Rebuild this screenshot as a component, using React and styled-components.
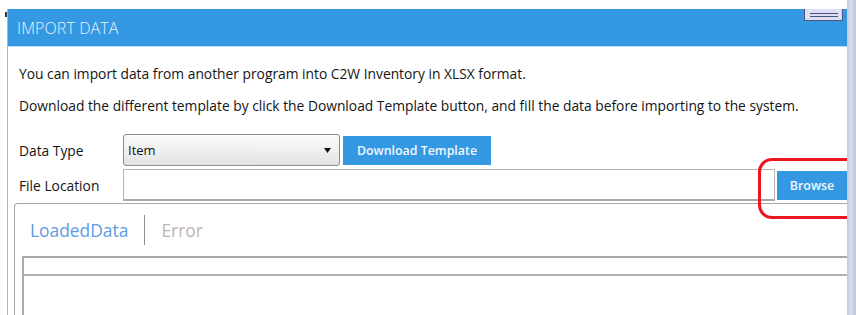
import styled, { createGlobalStyle } from "styled-components";

const GlobalStyle = createGlobalStyle`
  html, body {
    margin: 0;
    padding: 0;
    background: #ffffff;
  }
  body {
    font-family: "Open Sans", "Noto Sans", sans-serif;
    overflow: hidden;
  }
`;

export default function App() {
  return (
    <>
      <GlobalStyle />
      <PageStyled>
        <div className="stage">
          <span className="tick"></span>
          <Dialog>
            <TitleBar>
              <h1>IMPORT DATA</h1>
              <MenuButton aria-label="menu">
                <span></span>
                <span></span>
              </MenuButton>
            </TitleBar>
            <Body>
              <Intro>
                You can import data from another program into C2W Inventory in
                XLSX format.
              </Intro>
              <Intro>
                Download the different template by click the Download Template
                button, and fill the data before importing to the system.
              </Intro>
              <FormRow $top={19}>
                <Label>Data Type</Label>
                <SelectBox>
                  <span>Item</span>
                  <svg width="7" height="5" viewBox="0 0 7 5">
                    <path d="M0 0h7L3.5 5z" fill="#111" />
                  </svg>
                </SelectBox>
                <BlueButton $width={148}>Download Template</BlueButton>
              </FormRow>
              <FormRow $top={3}>
                <Label>File Location</Label>
                <FileInput />
                <BlueButton $width={70} $highlight>
                  Browse
                </BlueButton>
              </FormRow>
              <Panel>
                <Tabs>
                  <Tab $active>LoadedData</Tab>
                  <TabDivider />
                  <Tab>Error</Tab>
                </Tabs>
                <Grid>
                  <div className="head"></div>
                </Grid>
              </Panel>
            </Body>
          </Dialog>
        </div>
        <SideStrip />
      </PageStyled>
    </>
  );
}

const PageStyled = styled.div`
  display: flex;
  width: 856px;
  height: 315px;
  overflow: hidden;
  .stage {
    position: relative;
    flex: 1;
    padding: 9px 0 0 7px;
    min-width: 0;
  }
  .tick {
    position: absolute;
    left: 5px;
    top: 12px;
    width: 2px;
    height: 5px;
    background: #333;
  }
`;

const SideStrip = styled.div`
  width: 9px;
  height: 315px;
  background: linear-gradient(90deg, #c2cadb 0%, #d6dcea 40%, #bcc6d8 100%);
`;

const Dialog = styled.div`
  height: 306px;
  border-left: 1px solid #8fc0ec;
  background: #ffffff;
  overflow: hidden;
`;

const TitleBar = styled.div`
  position: relative;
  height: 37px;
  background: #3598e3;
  border-bottom: 1px solid #b5dbfa;
  display: flex;
  align-items: center;
  padding-left: 9px;
  h1 {
    margin: 0;
    font-family: "Open Sans", sans-serif;
    font-weight: 300;
    font-size: 16px;
    letter-spacing: 0.1px;
    color: #eaf2fb;
  }
`;

const MenuButton = styled.div`
  position: absolute;
  top: 0;
  right: 4px;
  width: 37px;
  height: 11px;
  background: #dcdff4;
  border: 1px solid #4b5479;
  border-top: none;
  display: flex;
  flex-direction: column;
  justify-content: center;
  align-items: center;
  gap: 2px;
  span {
    display: block;
    width: 28px;
    height: 1px;
    background: #4b5479;
  }
`;

const Body = styled.div`
  padding: 18px 0 0 11px;
`;

const Intro = styled.p`
  margin: 0 0 14px;
  height: 18px;
  line-height: 18px;
  font-size: 13.8px;
  color: #141414;
  white-space: nowrap;
`;

const FormRow = styled.div`
  display: flex;
  align-items: center;
  margin-top: ${(p) => p.$top}px;
  height: 32px;
`;

const Label = styled.div`
  width: 104px;
  font-size: 13.8px;
  color: #141414;
`;

const SelectBox = styled.div`
  box-sizing: border-box;
  width: 217px;
  height: 32px;
  border: 1px solid #8c8c8c;
  border-radius: 3px;
  background: linear-gradient(180deg, #fbfbfb 0%, #f0f0f0 50%, #e2e2e2 100%);
  display: flex;
  align-items: center;
  justify-content: space-between;
  padding: 0 8px 0 4px;
  font-size: 13px;
  color: #141414;
`;

const BlueButton = styled.div`
  box-sizing: border-box;
  position: relative;
  width: ${(p) => p.$width}px;
  height: 29px;
  margin-left: 3px;
  background: #3598e3;
  color: #f2f7fd;
  font-size: 12.4px;
  font-weight: 600;
  display: flex;
  align-items: center;
  justify-content: center;
  flex-shrink: 0;
  ${(p) =>
    p.$highlight &&
    `
    margin-left: 2px;
    &::after {
      content: "";
      position: absolute;
      left: -19px;
      top: -13px;
      width: 140px;
      height: 55px;
      border: 3.5px solid #ec1620;
      border-radius: 14px;
    }
  `}
`;

const FileInput = styled.div`
  box-sizing: border-box;
  width: 653px;
  height: 32px;
  border: 1px solid #b4b4b4;
  border-bottom: 2px solid #a8a8a8;
  background: #ffffff;
`;

const Panel = styled.div`
  margin: 2px 0 0 -5px;
  border: 1px solid #a6a6a6;
  border-right: none;
  border-top-left-radius: 4px;
  height: 120px;
  padding: 0 0 0 7px;
`;

const Tabs = styled.div`
  display: flex;
  align-items: center;
  height: 52px;
  padding-left: 6px;
`;

const Tab = styled.div`
  font-size: 17.4px;
  color: ${(p) => (p.$active ? "#5d9be6" : "#bdb3b3")};
  padding: 0 2px;
`;

const TabDivider = styled.div`
  width: 1px;
  height: 30px;
  background: #8f8f8f;
  margin: 0 14px 0 14px;
`;

const Grid = styled.div`
  border: 2px solid #a9a9a9;
  border-right: none;
  border-bottom: none;
  height: 80px;
  .head {
    height: 16px;
    border-bottom: 2px solid #b0b0b0;
  }
`;
